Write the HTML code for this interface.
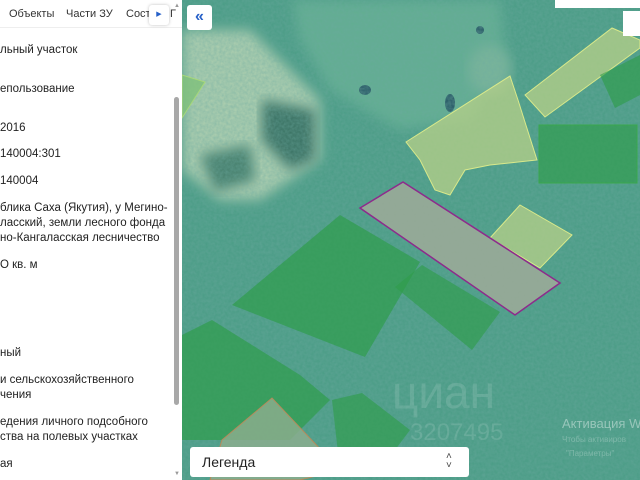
<!DOCTYPE html>
<html><head><meta charset="utf-8"><style>
body{margin:0;width:640px;height:480px;overflow:hidden;position:relative;font-family:"Liberation Sans",sans-serif;background:#fff}
#panel{position:absolute;left:0;top:0;width:182px;height:480px;background:#fff;overflow:hidden}
.tabs{position:absolute;top:0;left:0;width:182px;height:27px;border-bottom:1px solid #eee;font-size:11px;color:#333}
.tabs span{position:absolute;top:8px;white-space:nowrap}
.t{position:absolute;left:0;font-size:11.5px;color:#222;white-space:nowrap;line-height:15px}
#map{position:absolute;left:182px;top:0;width:458px;height:480px;overflow:hidden}
</style></head><body>
<div id="map">
<svg width="458" height="480" viewBox="182 0 458 480">
<defs><filter id="n" x="0" y="0" width="100%" height="100%"><feTurbulence type="fractalNoise" baseFrequency="0.35" numOctaves="2" seed="3"/><feColorMatrix values="0 0 0 0 0.15  0 0 0 0 0.4  0 0 0 0 0.35  0 0 0 0.6 -0.1"/></filter>
<filter id="b"><feGaussianBlur stdDeviation="6"/></filter></defs>
<rect x="182" y="0" width="458" height="480" fill="#4c9d87"/>
<path d="M292 0 L500 0 L505 60 L470 120 L400 130 L330 90 L300 40Z" fill="#62ad92" filter="url(#b)"/>
<ellipse cx="490" cy="70" rx="22" ry="25" fill="#78b49a" filter="url(#b)"/>
<path d="M182 30 L250 30 L320 100 L320 160 L260 200 L220 200 L182 170Z" fill="#a9ccae" filter="url(#b)"/>
<path d="M262 100 L315 110 L315 160 L290 170 L262 140Z" fill="#3c7566" filter="url(#b)"/>
<path d="M200 155 L250 145 L255 180 L215 192Z" fill="#4a8270" filter="url(#b)"/>
<ellipse cx="365" cy="90" rx="6" ry="5" fill="#2d5f6a"/><ellipse cx="450" cy="103" rx="5" ry="9" fill="#2d5f6a"/><ellipse cx="480" cy="30" rx="4" ry="4" fill="#2d5f6a"/>
<rect x="182" y="0" width="458" height="480" filter="url(#n)"/>
<path d="M182 75 L205 82 L182 118Z" fill="#7fc07a" fill-opacity=".8" stroke="#a8d87a"/>
<path d="M406 142 L510 76 L518 100 L537 160 L490 165 L465 170 L450 195 L435 190 L420 160Z" fill="#b7d088" fill-opacity=".75" stroke="#d9e98a"/>
<path d="M525 95 L612 28 L640 40 L640 48 L545 117Z" fill="#b7d088" fill-opacity=".75" stroke="#d9e98a"/>
<path d="M600 75 L640 55 L640 95 L615 108Z" fill="#2f9c4c" fill-opacity=".65"/>
<rect x="539" y="125" width="98" height="58" fill="#2f9c4c" fill-opacity=".65" stroke="#3aa84d"/>
<path d="M490 238 L520 205 L572 235 L540 268Z" fill="#b7d088" fill-opacity=".75" stroke="#d9e98a"/>
<path d="M232 305 L340 215 L420 262 L365 357Z" fill="#2f9c4c" fill-opacity=".7"/>
<path d="M395 287 L422 265 L500 312 L472 350Z" fill="#2f9c4c" fill-opacity=".65"/>
<path d="M182 335 L212 320 L300 375 L330 400 L290 440 L182 440Z" fill="#2f9c4c" fill-opacity=".7"/>
<path d="M332 400 L362 393 L410 430 L380 470 L340 470Z" fill="#2f9c4c" fill-opacity=".65"/>
<path d="M222 440 L272 398 L340 470 L300 480 L210 480Z" fill="#8fae8f" fill-opacity=".8" stroke="#b88a5a"/>
<path d="M403 182 L560 283 L515 315 L360 208Z" fill="#9aaa98" fill-opacity=".9" stroke="#8e2a8c" stroke-width="1.5"/>
<text x="392" y="408" font-size="46" fill="#fff" fill-opacity=".12" font-family="Liberation Sans">циан</text>
<text x="410" y="440" font-size="24" fill="#fff" fill-opacity=".12" font-family="Liberation Sans">3207495</text>
<text x="562" y="428" font-size="13" fill="#fff" fill-opacity=".4" font-family="Liberation Sans">Активация W</text>
<text x="562" y="442" font-size="8" fill="#fff" fill-opacity=".25" font-family="Liberation Sans">Чтобы активиров</text>
<text x="566" y="456" font-size="8" fill="#fff" fill-opacity=".25" font-family="Liberation Sans">"Параметры"</text>
<rect x="555" y="0" width="85" height="8" fill="#fff"/>
<rect x="623" y="11" width="17" height="25" fill="#fff"/>
</svg>
<div style="position:absolute;left:5px;top:5px;width:25px;height:25px;background:#fff;border-radius:3px;color:#2660c8;font-size:16px;text-align:center;line-height:23px;font-weight:bold">«</div>
<div style="position:absolute;left:8px;top:447px;width:279px;height:30px;background:#fff;border-radius:3px;font-size:14px;color:#222">
<span style="position:absolute;left:12px;top:7px">Легенда</span>
<span style="position:absolute;left:256px;top:5px;font-size:10px;line-height:9px;color:#444">˄<br>˅</span></div>
</div>
<div id="panel">
<div class="tabs"><span style="left:9px">Объекты</span><span style="left:66px">Части ЗУ</span><span style="left:126px">Соста</span><span style="left:170px">Г</span>
<div style="position:absolute;left:149px;top:5px;width:20px;height:20px;background:#fff;border-radius:3px;box-shadow:0 0 3px rgba(0,0,0,.25);font-size:7px;text-align:center;line-height:20px;color:#2660c8">▶</div></div>
<div class="t" style="top:43px">льный участок</div>
<div class="t" style="top:82px">епользование</div>
<div class="t" style="top:121px">2016</div>
<div class="t" style="top:147px">140004:301</div>
<div class="t" style="top:174px">140004</div>
<div class="t" style="top:201px">блика Саха (Якутия), у Мегино-<br>ласский, земли лесного фонда<br>но-Кангаласская лесничество</div>
<div class="t" style="top:258px">О кв. м</div>
<div class="t" style="top:346px">ный</div>
<div class="t" style="top:373px">и сельскохозяйственного<br>чения</div>
<div class="t" style="top:415px">едения личного подсобного<br>ства на полевых участках</div>
<div class="t" style="top:457px">ая</div>
<div style="position:absolute;left:174px;top:97px;width:5px;height:308px;background:#a8a8a8;border-radius:3px"></div>
<div style="position:absolute;left:174px;top:3px;font-size:6px;color:#999">▲</div>
<div style="position:absolute;left:174px;top:471px;font-size:6px;color:#999">▼</div>
</div>
</body></html>
